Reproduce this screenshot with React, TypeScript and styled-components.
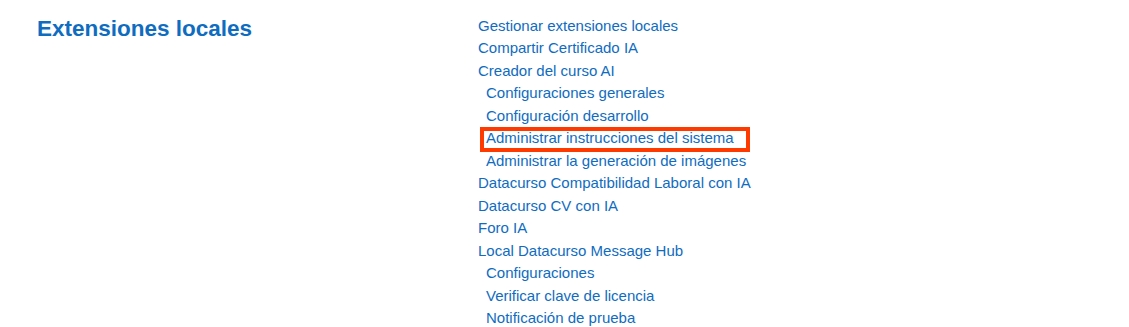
import styled, { createGlobalStyle } from "styled-components";

const Global = createGlobalStyle`
  body {
    margin: 0;
    background: #fff;
    font-family: "Liberation Sans", Arial, sans-serif;
  }
`;

const Section = styled.section`
  display: grid;
  grid-template-columns: 441px 1fr;
  padding: 14.5px 0 0 37px;
`;

const Title = styled.h3`
  margin: 0;
  font-size: 22.5px;
  line-height: 1.2;
  font-weight: bold;
  color: #0f6cbf;
`;

const List = styled.ul`
  list-style: none;
  margin: 0;
  padding: 0;
`;

const Item = styled.li<{ $sub?: boolean }>`
  font-size: 15px;
  line-height: 22.5px;
  padding-left: ${(p) => (p.$sub ? "8px" : "0")};
`;

const Link = styled.a<{ $marked?: boolean }>`
  color: #0f6cbf;
  text-decoration: none;
  position: relative;
  display: inline-block;

  ${(p) =>
    p.$marked &&
    `
    &::after {
      content: "";
      position: absolute;
      left: -6px;
      right: -16px;
      top: 0;
      bottom: -2.5px;
      border: 4px solid #ff3a00;
      pointer-events: none;
    }
  `}
`;

const items: { label: string; sub?: boolean; marked?: boolean }[] = [
  { label: "Gestionar extensiones locales" },
  { label: "Compartir Certificado IA" },
  { label: "Creador del curso AI" },
  { label: "Configuraciones generales", sub: true },
  { label: "Configuración desarrollo", sub: true },
  { label: "Administrar instrucciones del sistema", sub: true, marked: true },
  { label: "Administrar la generación de imágenes", sub: true },
  { label: "Datacurso Compatibilidad Laboral con IA" },
  { label: "Datacurso CV con IA" },
  { label: "Foro IA" },
  { label: "Local Datacurso Message Hub" },
  { label: "Configuraciones", sub: true },
  { label: "Verificar clave de licencia", sub: true },
  { label: "Notificación de prueba", sub: true },
];

export default function App() {
  return (
    <>
      <Global />
      <Section>
        <Title>Extensiones locales</Title>
        <List>
          {items.map((it) => (
            <Item key={it.label} $sub={it.sub}>
              <Link href="#" $marked={it.marked}>
                {it.label}
              </Link>
            </Item>
          ))}
        </List>
      </Section>
    </>
  );
}
